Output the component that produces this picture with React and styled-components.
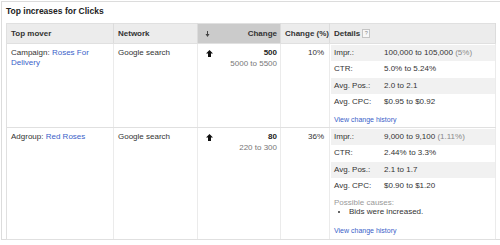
import React from "react";
import styled, { createGlobalStyle } from "styled-components";

const GlobalStyle = createGlobalStyle`
  html, body { margin: 0; padding: 0; background: #fff; }
  body {
    font-family: "Liberation Sans", Arial, Helvetica, sans-serif;
    color: #333;
    overflow: hidden;
  }
`;

const Panel = styled.div`
  margin: 1px 0 0 1px;
  width: 499px;
  height: 239px;
  box-sizing: border-box;
  border: 1px solid #dcdcdc;
  border-right: none;
  padding: 0 0 0 4px;
`;

const Title = styled.h2`
  margin: 0;
  padding: 3px 0 6px 0;
  font-size: 8.5px;
  line-height: 12px;
  font-weight: bold;
  color: #222;
`;

const Table = styled.table`
  border-collapse: collapse;
  table-layout: fixed;
  width: 489px;
  border: 1px solid #e0e0e0;
`;

const Th = styled.th`
  background: ${(p) => (p.$sorted ? "#cbcbcb" : "#ececec")};
  height: 19px;
  padding: 0 ${(p) => (p.$sorted ? "3px 0 7px" : "4px")};
  font-size: 8px;
  font-weight: bold;
  color: #333;
  text-align: ${(p) => p.$align || "left"};
  vertical-align: middle;
  border-right: 1px solid #dcdcdc;
  border-bottom: 1px solid #e0e0e0;
  white-space: nowrap;
`;

const Td = styled.td`
  vertical-align: top;
  padding: ${(p) => p.$pad || "4px 4px"};
  font-size: 8px;
  line-height: 10px;
  text-align: ${(p) => p.$align || "left"};
  border-right: 1px solid #ebebeb;
  border-bottom: 1px solid #e0e0e0;
  color: #333;
`;

const SortHead = styled.div`
  display: flex;
  justify-content: space-between;
  align-items: center;
`;

const HeadLabel = styled.span`
  display: inline-flex;
  align-items: center;
`;

const HelpBox = styled.span`
  display: inline-flex;
  align-items: center;
  justify-content: center;
  width: 6px;
  height: 7px;
  margin-left: 2px;
  border: 1px solid #c4c4c4;
  background: #f7f7f7;
  color: #888;
  font-size: 5.5px;
  font-weight: normal;
  line-height: 1;
`;

const Link = styled.span`
  color: #3b5fc9;
`;

const ChangeTop = styled.div`
  display: flex;
  justify-content: space-between;
  align-items: center;
  padding-left: 4px;
`;

const Bold = styled.span`
  font-weight: bold;
  color: #222;
`;

const SubRange = styled.div`
  margin-top: 1px;
  color: #777;
  text-align: right;
`;

const DetailList = styled.div`
  display: flex;
  flex-direction: column;
  gap: 1px;
`;

const DetailRow = styled.div`
  display: grid;
  grid-template-columns: 50px 1fr;
  align-items: center;
  height: 15.5px;
  padding-left: 3px;
  background: ${(p) => (p.$shade ? "#f1f1f1" : "#fff")};
  white-space: nowrap;
`;

const Muted = styled.span`
  color: #8a8a8a;
`;

const SmallLink = styled.div`
  margin-top: ${(p) => p.$mt || "5px"};
  padding-left: 3px;
  font-size: 7px;
  line-height: 9px;
  color: #3b5fc9;
`;

const Causes = styled.div`
  margin-top: 4px;
  padding-left: 3px;
  line-height: 9px;
  color: #999;
`;

const CauseList = styled.ul`
  margin: 0;
  padding: 0 0 0 15px;
  color: #333;
  line-height: 9px;
  list-style: disc;
`;

const UpArrow = () => (
  <svg width="7" height="7" viewBox="0 0 7 7">
    <polygon points="3.5,0 7,3.6 5,3.6 5,7 2,7 2,3.6 0,3.6" fill="#111" />
  </svg>
);

const DownArrow = () => (
  <svg width="5" height="6" viewBox="0 0 5 6">
    <line x1="2.5" y1="0" x2="2.5" y2="4" stroke="#444" strokeWidth="1" />
    <polygon points="0.5,3 4.5,3 2.5,6" fill="#444" />
  </svg>
);

const rows = [
  {
    kind: "Campaign",
    name: "Roses For Delivery",
    change: "500",
    range: "5000 to 5500",
    pct: "10%",
    details: [
      ["Impr.:", "100,000 to 105,000", "(5%)"],
      ["CTR:", "5.0% to 5.24%"],
      ["Avg. Pos.:", "2.0 to 2.1"],
      ["Avg. CPC:", "$0.95 to $0.92"],
    ],
  },
  {
    kind: "Adgroup",
    name: "Red Roses",
    change: "80",
    range: "220 to 300",
    pct: "36%",
    details: [
      ["Impr.:", "9,000 to 9,100", "(1.11%)"],
      ["CTR:", "2.44% to 3.3%"],
      ["Avg. Pos.:", "2.1 to 1.7"],
      ["Avg. CPC:", "$0.90 to $1.20"],
    ],
    causes: ["Bids were increased."],
  },
];

export default function App() {
  return (
    <>
      <GlobalStyle />
      <Panel>
        <Title>Top increases for Clicks</Title>
        <Table>
          <colgroup>
            <col style={{ width: 107 }} />
            <col style={{ width: 84 }} />
            <col style={{ width: 83 }} />
            <col style={{ width: 49 }} />
            <col style={{ width: 166 }} />
          </colgroup>
          <thead>
            <tr>
              <Th>Top mover</Th>
              <Th>Network</Th>
              <Th $sorted>
                <SortHead>
                  <DownArrow />
                  <span>Change</span>
                </SortHead>
              </Th>
              <Th $align="right">Change (%)</Th>
              <Th>
                <HeadLabel>
                  Details<HelpBox>?</HelpBox>
                </HeadLabel>
              </Th>
            </tr>
          </thead>
          <tbody>
            {rows.map((r) => (
              <tr key={r.name}>
                <Td>
                  {r.kind}: <Link>{r.name}</Link>
                </Td>
                <Td>Google search</Td>
                <Td $pad="4px 3px 4px 4px">
                  <ChangeTop>
                    <UpArrow />
                    <Bold>{r.change}</Bold>
                  </ChangeTop>
                  <SubRange>{r.range}</SubRange>
                </Td>
                <Td $align="right" $pad="4px 5px 4px 4px">
                  {r.pct}
                </Td>
                <Td $pad={r.causes ? "1px 0 3.5px 1px" : "1px 0 3px 1px"}>
                  <DetailList>
                    {r.details.map((d, i) => (
                      <DetailRow key={d[0]} $shade={i % 2 === 0}>
                        <span>{d[0]}</span>
                        <span>
                          {d[1]}
                          {d[2] && <Muted> {d[2]}</Muted>}
                        </span>
                      </DetailRow>
                    ))}
                  </DetailList>
                  {r.causes && (
                    <Causes>
                      Possible causes:
                      <CauseList>
                        {r.causes.map((c) => (
                          <li key={c}>{c}</li>
                        ))}
                      </CauseList>
                    </Causes>
                  )}
                  <SmallLink $mt={r.causes ? "10px" : "5px"}>
                    View change history
                  </SmallLink>
                </Td>
              </tr>
            ))}
          </tbody>
        </Table>
      </Panel>
    </>
  );
}
